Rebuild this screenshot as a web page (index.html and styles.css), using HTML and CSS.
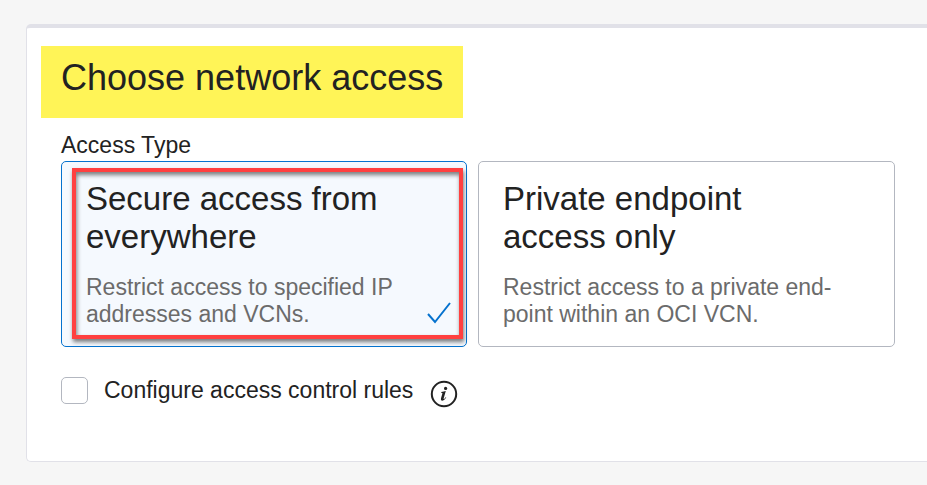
FILE: index.html
```html
<!DOCTYPE html>
<html lang="en">
<head>
<meta charset="utf-8">
<title>Choose network access</title>
<link rel="stylesheet" href="styles.css">
</head>
<body>
<main class="panel">
  <h1 class="panel-title">Choose network access</h1>
  <form class="panel-body">
    <fieldset class="access">
      <legend class="access-label">Access Type</legend>
      <div class="cards">
        <label class="card">
          <input class="card-input" type="radio" name="access" checked>
          <span class="card-title">Secure access from everywhere</span>
          <span class="card-text">Restrict access to specified IP addresses and VCNs.</span>
          <svg class="card-check" viewBox="0 0 24 22" aria-hidden="true"><path d="M1 12 L8 20 L23 1"/></svg>
          <span class="callout"></span>
        </label>
        <label class="card">
          <input class="card-input" type="radio" name="access">
          <span class="card-title">Private endpoint<br>access only</span>
          <span class="card-text">Restrict access to a private end-<br>point within an OCI VCN.</span>
        </label>
      </div>
    </fieldset>
    <div class="rules">
      <input class="rules-box" type="checkbox" id="rules">
      <label class="rules-label" for="rules">Configure access control rules</label>
      <button class="info" type="button" aria-label="More information">
        <svg viewBox="0 0 28 28" aria-hidden="true">
          <circle cx="14" cy="14" r="12.2"/>
          <path class="info-stem" d="M11.2 12.1 Q14 11.7 15.8 11 L13.7 18.3 Q13.4 19.4 14.1 19 Q14.9 18.4 15.7 17.2 L16.3 17.6 Q14.1 20.9 12 20.7 Q10.4 20.3 11 18.2 L12.4 13.4 Q12.6 12.7 11.1 12.8 Z"/>
          <circle class="info-stem" cx="15.6" cy="8.4" r="1.6"/>
        </svg>
      </button>
    </div>
  </form>
</main>
</body>
</html>
```

FILE: styles.css
```css
* {
  box-sizing: border-box;
}

body {
  margin: 0;
  padding: 24px 0 24px 26px;
  background: #f6f6f6;
  color: #222;
  font-family: "Liberation Sans", Arial, sans-serif;
  font-size: 23px;
  line-height: 28px;
}

.panel {
  padding: 18px 32px 53px 14px;
  border: 1px solid #e1e1e8;
  border-top-width: 4px;
  border-right: 0;
  border-radius: 5px 0 0 5px;
  background: #fff;
}

.panel-title {
  width: fit-content;
  margin: 0;
  padding: 12px 20px 20px;
  background: #fff457;
  font-size: 36px;
  font-weight: 400;
  line-height: 40px;
}

.panel-body {
  padding: 13px 0 0 20px;
}

.access {
  min-width: 0;
  margin: 0;
  padding: 0;
  border: 0;
}

.access-label {
  padding: 0 0 2px;
}

.cards {
  display: grid;
  grid-template-columns: 406fr 417fr;
  gap: 11px;
}

.card {
  position: relative;
  display: flex;
  flex-direction: column;
  gap: 18px;
  padding: 18px 24px;
  border: 1px solid #b3b7c0;
  border-radius: 5px;
  cursor: pointer;
}

.card:has(.card-input:checked) {
  border-color: #0572ce;
  background: #f5f9fe;
}

.card-input {
  position: absolute;
  margin: 0;
  opacity: 0;
}

.card-title {
  font-size: 33px;
  line-height: 38px;
}

.card-text {
  color: #6b6b6b;
  line-height: 27px;
}

.card-check {
  position: absolute;
  right: 15px;
  bottom: 22px;
  width: 24px;
  height: 22px;
  fill: none;
  stroke: #0572ce;
  stroke-width: 2;
}

.callout {
  position: absolute;
  inset: 6px 3px 7px 10px;
  border: 4px solid #ff4040;
  box-shadow: 1px 3px 4px rgba(0, 0, 0, 0.5), inset 1px 3px 4px rgba(0, 0, 0, 0.5);
  pointer-events: none;
}

.rules {
  display: flex;
  align-items: center;
  margin-top: 25px;
}

.rules-box {
  appearance: none;
  width: 27px;
  height: 27px;
  margin: 0 16px 0 0;
  border: 1px solid #b3b7c0;
  border-radius: 5px;
  background: #fff;
}

.info {
  width: 28px;
  height: 28px;
  margin: 8px 0 0 17px;
  padding: 0;
  border: 0;
  background: none;
}

.info svg {
  display: block;
  fill: none;
  stroke: #222;
  stroke-width: 2;
}

.info .info-stem {
  fill: #222;
  stroke: none;
}
```
